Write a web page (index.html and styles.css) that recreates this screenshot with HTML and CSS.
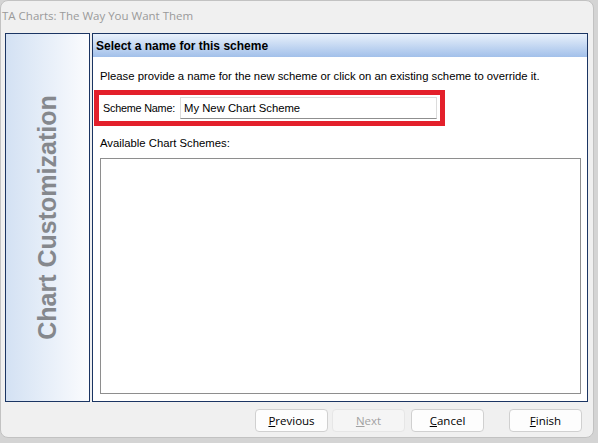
FILE: index.html
```html
<!DOCTYPE html>
<html lang="en">
<head>
  <meta charset="UTF-8">
  <title>TA Charts: The Way You Want Them</title>
  <link rel="stylesheet" href="styles.css">
</head>
<body>

  <div class="window">
    <div class="titlebar">TA Charts: The Way You Want Them</div>

    <div class="content">
      <div class="side-panel">
        <span class="side-title">Chart Customization</span>
      </div>

      <div class="main-panel">
        <div class="panel-header">Select a name for this scheme</div>
        <p class="intro">Please provide a name for the new scheme or click on an existing scheme to override it.</p>

        <!-- highlighted name field -->
        <div class="highlight">
          <label for="schemeName">Scheme Name:</label>
          <input type="text" id="schemeName" value="My New Chart Scheme">
        </div>

        <div class="list-label">Available Chart Schemes:</div>
        <div class="scheme-list"></div>
      </div>
    </div>

    <div class="footer">
      <button class="btn"><u>P</u>revious</button>
      <button class="btn disabled"><u>N</u>ext</button>
      <button class="btn cancel"><u>C</u>ancel</button>
      <button class="btn"><u>F</u>inish</button>
    </div>
  </div>

</body>
</html>
```

FILE: styles.css
```css
body {
  margin: 0;
  background-color: #d4d4d4;
  font-family: "Liberation Sans", Arial, sans-serif;
  font-size: 11.3px;
  color: #000;
}
.window {
  box-sizing: border-box;
  width: 594px;
  height: 438px;
  background-color: #f0f0f0;
  border: 1px solid #c2c2c2;
  border-radius: 8px;
  display: flex;
  flex-direction: column;
}
.titlebar {
  height: 32px;
  padding-left: 1px;
  line-height: 30px;
  font-family: "Open Sans", sans-serif;
  font-size: 11.5px;
  color: #9a9a9a;
}
.content {
  display: flex;
  gap: 2px;
  padding-left: 4px;
  height: 369px;
}
.side-panel {
  box-sizing: border-box;
  width: 85px;
  border: 1px solid #1b3563;
  background: linear-gradient(to right, #d3e1f3, #fbfcfe);
  display: flex;
  align-items: center;
  justify-content: center;
}
.side-title {
  transform: rotate(-90deg);
  white-space: nowrap;
  font-size: 25px;
  font-weight: bold;
  color: #85888d;
}
.main-panel {
  box-sizing: border-box;
  width: 496px;
  border: 1px solid #1b3563;
  background-color: #fff;
  display: flex;
  flex-direction: column;
}
.panel-header {
  height: 23px;
  line-height: 24px;
  padding-left: 3px;
  font-size: 12px;
  font-weight: bold;
  background: linear-gradient(to bottom, #e9f1fb, #a2c0ea);
}
.intro {
  margin: 12px 0 0 7px;
  line-height: 14px;
}
.highlight {
  display: flex;
  align-items: center;
  width: 351px;
  height: 36px;
  box-sizing: border-box;
  margin: 7px 0 0 1px;
  padding-left: 4px;
  border: 5px solid #e3202b;
}
.highlight label {
  width: 77px;
  flex-shrink: 0;
  white-space: nowrap;
  font-size: 10.8px;
  letter-spacing: -0.2px;
}
.highlight input {
  box-sizing: border-box;
  width: 257px;
  height: 22px;
  flex-shrink: 0;
  margin: 0;
  padding: 0 0 0 3px;
  border: 1px solid #dcdcdc;
  border-bottom-color: #8f8f8f;
  font-family: "Liberation Sans", Arial, sans-serif;
  font-size: 11.3px;
  outline: none;
}
.list-label {
  margin: 10px 0 0 7px;
  line-height: 14px;
}
.scheme-list {
  box-sizing: border-box;
  width: 481px;
  height: 236px;
  margin: 8px 0 0 7px;
  border: 1px solid #8e8e8e;
}
.footer {
  display: flex;
  padding: 7px 0 0 254px;
}
.btn {
  box-sizing: border-box;
  width: 73px;
  height: 23px;
  margin-right: 4px;
  background-color: #fdfdfd;
  border: 1px solid #d0d0d0;
  border-radius: 4px;
  font-family: "Open Sans", sans-serif;
  font-size: 11.5px;
  color: #000;
  padding: 0;
}
.btn.disabled {
  background-color: #f5f5f5;
  border-color: #e6e6e6;
  color: #a2a2a2;
  margin-right: 6px;
}
.btn.cancel {
  margin-right: 25px;
}
```
